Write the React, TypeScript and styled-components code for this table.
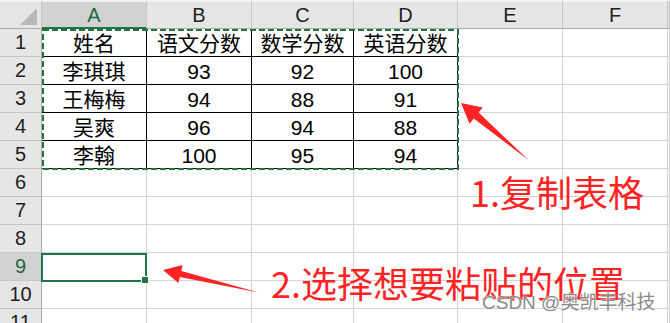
import React from 'react'
import styled, { createGlobalStyle } from 'styled-components'

const GREEN = '#217346'
const GRID = '#d4d4d4'
const HEAD_BG = '#e6e6e6'
const HEAD_ACTIVE = '#d2d2d2'
const RED = '#ff2323'

const GlobalStyle = createGlobalStyle`
  html, body {
    margin: 0;
    padding: 0;
    background: #fff;
  }
  body {
    font-family: "Liberation Sans", "Noto Sans CJK SC", sans-serif;
  }
`

const columns = ['A', 'B', 'C', 'D', 'E', 'F', '']
const colWidths = [105, 105, 102, 104, 105, 105]
const rowCount = 11
const activeCol = 'A'
const activeRow = 9

const table = [
  ['姓名', '语文分数', '数学分数', '英语分数'],
  ['李琪琪', '93', '92', '100'],
  ['王梅梅', '94', '88', '91'],
  ['吴爽', '96', '94', '88'],
  ['李翰', '100', '95', '94'],
]

export default function App() {
  return (
    <>
      <GlobalStyle />
      <S.Page>
        <S.Sheet>
          <S.Corner>
            <S.CornerTriangle />
          </S.Corner>
          {columns.map((c, ci) => (
            <S.ColHeader key={ci} $c={ci + 2} $active={c === activeCol}>{c}</S.ColHeader>
          ))}

          {Array.from({ length: rowCount }).map((_, r) => {
            const rowNo = r + 1
            const data = table[r]
            return (
              <React.Fragment key={rowNo}>
                <S.RowHeader $r={rowNo + 1} $active={rowNo === activeRow}>{rowNo}</S.RowHeader>
                {columns.map((c, ci) => {
                  const inTable = !!data && ci < 4
                  return (
                    <S.Cell key={ci} $r={rowNo + 1} $c={ci + 2} $boxed={inTable}>
                      {inTable ? data[ci] : ''}
                    </S.Cell>
                  )
                })}
              </React.Fragment>
            )
          })}

          <S.Marquee>
            <svg width="417" height="141">
              <rect x="1" y="1" width="415" height="139" fill="none"
                stroke={GREEN} strokeWidth="2" strokeDasharray="6 3" />
            </svg>
          </S.Marquee>

          <S.Selection>
            <S.FillHandle />
          </S.Selection>
        </S.Sheet>

        <S.Overlay>
          <S.Arrows width="670" height="323">
            <polygon fill={RED}
              points="461,103 482.7,107.5 478.6,112.6 529,160.5 473.8,118.6 469.5,123.8" />
            <polygon fill={RED}
              points="163,270 182.6,265 181.3,271 258.5,292.5 179.9,277 178.4,283" />
          </S.Arrows>
          <S.Note $left={470} $top={171}>1.复制表格</S.Note>
          <S.Note $left={271} $top={262}>2.选择想要粘贴的位置</S.Note>
          <S.Watermark>CSDN @奥凯丰科技</S.Watermark>
        </S.Overlay>
      </S.Page>
    </>
  )
}

interface ActiveProps {
  $active?: boolean
}

interface PlaceProps {
  $r?: number
  $c?: number
}

interface CellProps extends PlaceProps {
  $boxed?: boolean
}

interface NoteProps {
  $left: number
  $top: number
}

const S = {
  Page: styled.div`
    position: relative;
    width: 670px;
    height: 323px;
    overflow: hidden;
    background: #fff;
  `,
  Sheet: styled.div`
    display: grid;
    grid-template-columns: 42px ${colWidths.map(w => `${w}px`).join(' ')} 1fr;
    grid-template-rows: 29px repeat(${rowCount}, 28px);
    width: 670px;
  `,
  Corner: styled.div`
    grid-row: 1;
    grid-column: 1;
    box-sizing: border-box;
    background: ${HEAD_BG};
    border-top: 2px solid #f3f3f3;
    border-right: 1px solid #c6c6c6;
    border-bottom: 1px solid #ababab;
    display: flex;
    align-items: flex-end;
    justify-content: flex-end;
    padding: 0 4px 3px 0;
  `,
  CornerTriangle: styled.div`
    width: 0;
    height: 0;
    border-left: 17px solid transparent;
    border-bottom: 17px solid #b9b9b9;
  `,
  ColHeader: styled.div<ActiveProps & PlaceProps>`
    grid-row: 1;
    grid-column: ${p => p.$c};
    box-sizing: border-box;
    background: ${p => (p.$active ? HEAD_ACTIVE : HEAD_BG)};
    border-top: 2px solid #f3f3f3;
    border-right: 1px solid #c6c6c6;
    border-bottom: ${p => (p.$active ? `2px solid ${GREEN}` : '1px solid #ababab')};
    color: ${p => (p.$active ? '#1d6a42' : '#222')};
    font-size: 20px;
    display: flex;
    align-items: center;
    justify-content: center;
    padding-top: 1px;
  `,
  RowHeader: styled.div<ActiveProps & PlaceProps>`
    grid-row: ${p => p.$r};
    grid-column: 1;
    box-sizing: border-box;
    background: ${p => (p.$active ? HEAD_ACTIVE : HEAD_BG)};
    border-right: 1px solid #ababab;
    border-bottom: 1px solid #c6c6c6;
    color: ${p => (p.$active ? '#1d6a42' : '#222')};
    font-size: 20px;
    display: flex;
    align-items: center;
    justify-content: center;
  `,
  Cell: styled.div<CellProps>`
    grid-row: ${p => p.$r};
    grid-column: ${p => p.$c};
    box-sizing: border-box;
    border-right: 1px solid ${p => (p.$boxed ? '#000' : GRID)};
    border-bottom: 1px solid ${p => (p.$boxed ? '#000' : GRID)};
    color: #000;
    font-size: 21px;
    line-height: 24px;
    display: flex;
    align-items: center;
    justify-content: center;
    padding-top: 3px;
    white-space: nowrap;
  `,
  Marquee: styled.div`
    grid-column: 2 / 6;
    grid-row: 2 / 7;
    pointer-events: none;
    z-index: 2;
    svg {
      display: block;
      overflow: visible;
    }
  `,
  Selection: styled.div`
    grid-column: 2 / 3;
    grid-row: 10 / 11;
    margin: 0 0 -1px -1px;
    border: 2px solid ${GREEN};
    position: relative;
    z-index: 2;
  `,
  FillHandle: styled.div`
    position: absolute;
    right: -4px;
    bottom: -4px;
    width: 6px;
    height: 6px;
    background: ${GREEN};
    border: 1px solid #fff;
  `,
  Overlay: styled.div`
    position: absolute;
    inset: 0;
    pointer-events: none;
    z-index: 3;
  `,
  Arrows: styled.svg`
    position: absolute;
    left: 0;
    top: 0;
  `,
  Note: styled.div<NoteProps>`
    position: absolute;
    left: ${p => p.$left}px;
    top: ${p => p.$top}px;
    font-family: "Noto Sans CJK SC", sans-serif;
    font-size: 36px;
    line-height: 40px;
    color: ${RED};
    white-space: nowrap;
  `,
  Watermark: styled.div`
    position: absolute;
    left: 482px;
    top: 292px;
    font-family: "Liberation Sans", "Noto Sans CJK SC", sans-serif;
    font-size: 19px;
    line-height: 22px;
    color: #8a8a8a;
    white-space: nowrap;
    text-shadow: 0 0 2px #fff, 0 0 1px #fff;
  `,
}
